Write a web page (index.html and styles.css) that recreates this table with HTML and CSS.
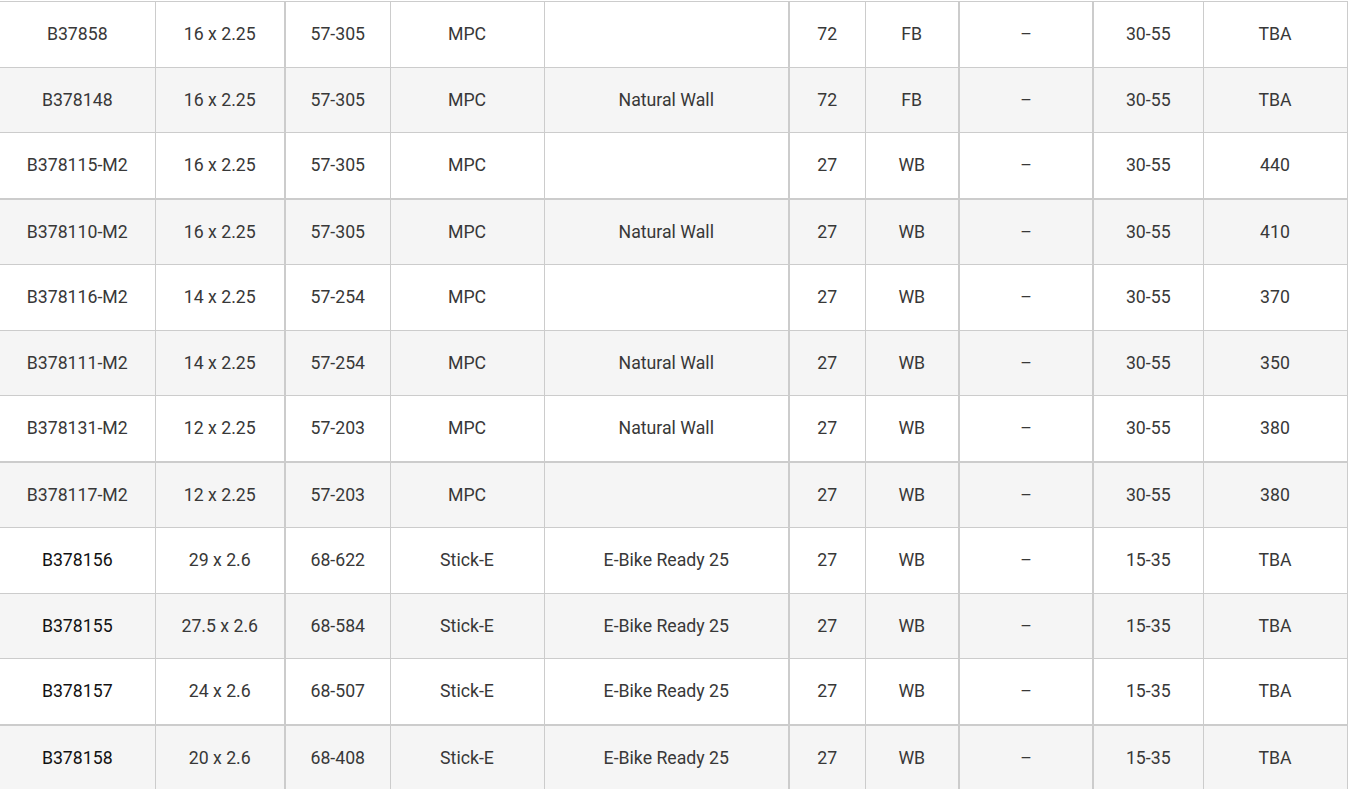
FILE: index.html
```html
<!DOCTYPE html>
<html>
<head>
<meta charset="utf-8">
<link rel="stylesheet" href="styles.css">
</head>
<body>
<table class="spec">
  <colgroup>
    <col class="c1"><col class="c2"><col class="c3"><col class="c4"><col class="c5">
    <col class="c6"><col class="c7"><col class="c8"><col class="c9"><col class="c10">
  </colgroup>
  <tbody>
    <tr><td>B37858</td><td>16 x 2.25</td><td class="tl">57-305</td><td>MPC</td><td></td><td class="tl">72</td><td>FB</td><td class="tl">–</td><td class="tl">30-55</td><td>TBA</td></tr>
    <tr class="alt"><td>B378148</td><td>16 x 2.25</td><td class="tl">57-305</td><td>MPC</td><td>Natural Wall</td><td class="tl">72</td><td>FB</td><td class="tl">–</td><td class="tl">30-55</td><td>TBA</td></tr>
    <tr><td>B378115-M2</td><td>16 x 2.25</td><td class="tl">57-305</td><td>MPC</td><td></td><td class="tl">27</td><td>WB</td><td class="tl">–</td><td class="tl">30-55</td><td>440</td></tr>
    <tr class="alt tt"><td>B378110-M2</td><td>16 x 2.25</td><td class="tl">57-305</td><td>MPC</td><td>Natural Wall</td><td class="tl">27</td><td>WB</td><td class="tl">–</td><td class="tl">30-55</td><td>410</td></tr>
    <tr><td>B378116-M2</td><td>14 x 2.25</td><td class="tl">57-254</td><td>MPC</td><td></td><td class="tl">27</td><td>WB</td><td class="tl">–</td><td class="tl">30-55</td><td>370</td></tr>
    <tr class="alt"><td>B378111-M2</td><td>14 x 2.25</td><td class="tl">57-254</td><td>MPC</td><td>Natural Wall</td><td class="tl">27</td><td>WB</td><td class="tl">–</td><td class="tl">30-55</td><td>350</td></tr>
    <tr><td>B378131-M2</td><td>12 x 2.25</td><td class="tl">57-203</td><td>MPC</td><td>Natural Wall</td><td class="tl">27</td><td>WB</td><td class="tl">–</td><td class="tl">30-55</td><td>380</td></tr>
    <tr class="alt tt"><td>B378117-M2</td><td>12 x 2.25</td><td class="tl">57-203</td><td>MPC</td><td></td><td class="tl">27</td><td>WB</td><td class="tl">–</td><td class="tl">30-55</td><td>380</td></tr>
    <tr><td class="dark">B378156</td><td>29 x 2.6</td><td class="tl">68-622</td><td>Stick-E</td><td>E-Bike Ready 25</td><td class="tl">27</td><td>WB</td><td class="tl">–</td><td class="tl">15-35</td><td>TBA</td></tr>
    <tr class="alt"><td class="dark">B378155</td><td>27.5 x 2.6</td><td class="tl">68-584</td><td>Stick-E</td><td>E-Bike Ready 25</td><td class="tl">27</td><td>WB</td><td class="tl">–</td><td class="tl">15-35</td><td>TBA</td></tr>
    <tr><td class="dark">B378157</td><td>24 x 2.6</td><td class="tl">68-507</td><td>Stick-E</td><td>E-Bike Ready 25</td><td class="tl">27</td><td>WB</td><td class="tl">–</td><td class="tl">15-35</td><td>TBA</td></tr>
    <tr class="alt tt"><td class="dark">B378158</td><td>20 x 2.6</td><td class="tl">68-408</td><td>Stick-E</td><td>E-Bike Ready 25</td><td class="tl">27</td><td>WB</td><td class="tl">–</td><td class="tl">15-35</td><td>TBA</td></tr>
  </tbody>
</table>
</body>
</html>
```

FILE: styles.css
```css
html, body {
  margin: 0;
  padding: 0;
  background: #ffffff;
  overflow: hidden;
}

.spec {
  margin-top: 1px;
  width: 1347px;
  border-collapse: collapse;
  table-layout: fixed;
  font-family: Roboto, "Liberation Sans", sans-serif;
  font-size: 17.7px;
  color: #383838;
}

.c1 { width: 155px; }
.c2 { width: 130px; }
.c3 { width: 105px; }
.c4 { width: 154px; }
.c5 { width: 245px; }
.c6 { width: 76px; }
.c7 { width: 94px; }
.c8 { width: 134px; }
.c9 { width: 110px; }
.c10 { width: 144px; }

.spec td {
  height: 64.5px;
  padding: 0;
  text-align: center;
  vertical-align: middle;
  border: 1px solid #cccccc;
  line-height: 20px;
}

.spec tr td:first-child {
  border-left: none;
}

.spec tr.alt td {
  background: #f5f5f5;
}

.spec tr.tt td {
  border-top-width: 2px;
}

.spec td.tl {
  border-left-width: 2px;
}

.spec td.dark {
  color: #111111;
}
```
